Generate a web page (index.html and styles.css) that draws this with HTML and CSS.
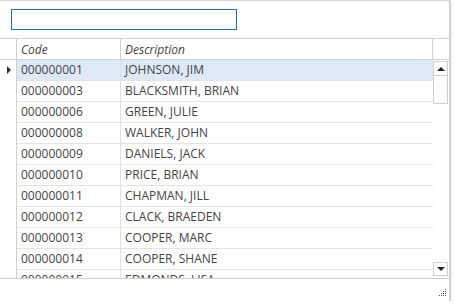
FILE: index.html
```html
<!DOCTYPE html>
<html lang="en">
<head>
  <meta charset="UTF-8">
  <title>Employee Lookup</title>
  <link rel="stylesheet" href="styles.css">
</head>
<body>
  <div class="window">
    <div class="search">
      <input type="text" class="search-box">
    </div>

    <div class="grid">
      <div class="grid-head">
        <div class="cell rowhead"></div>
        <div class="cell code head">Code</div>
        <div class="cell desc head">Description</div>
        <div class="cell corner"></div>
      </div>
      <div class="grid-body">
        <div class="rows">
          <div class="row selected">
            <div class="cell rowhead"><span class="marker"></span></div>
            <div class="cell code">000000001</div>
            <div class="cell desc">JOHNSON, JIM</div>
          </div>
          <div class="row">
            <div class="cell rowhead"></div>
            <div class="cell code">000000003</div>
            <div class="cell desc">BLACKSMITH, BRIAN</div>
          </div>
          <div class="row">
            <div class="cell rowhead"></div>
            <div class="cell code">000000006</div>
            <div class="cell desc">GREEN, JULIE</div>
          </div>
          <div class="row">
            <div class="cell rowhead"></div>
            <div class="cell code">000000008</div>
            <div class="cell desc">WALKER, JOHN</div>
          </div>
          <div class="row">
            <div class="cell rowhead"></div>
            <div class="cell code">000000009</div>
            <div class="cell desc">DANIELS, JACK</div>
          </div>
          <div class="row">
            <div class="cell rowhead"></div>
            <div class="cell code">000000010</div>
            <div class="cell desc">PRICE, BRIAN</div>
          </div>
          <div class="row">
            <div class="cell rowhead"></div>
            <div class="cell code">000000011</div>
            <div class="cell desc">CHAPMAN, JILL</div>
          </div>
          <div class="row">
            <div class="cell rowhead"></div>
            <div class="cell code">000000012</div>
            <div class="cell desc">CLACK, BRAEDEN</div>
          </div>
          <div class="row">
            <div class="cell rowhead"></div>
            <div class="cell code">000000013</div>
            <div class="cell desc">COOPER, MARC</div>
          </div>
          <div class="row">
            <div class="cell rowhead"></div>
            <div class="cell code">000000014</div>
            <div class="cell desc">COOPER, SHANE</div>
          </div>
          <div class="row">
            <div class="cell rowhead"></div>
            <div class="cell code">000000015</div>
            <div class="cell desc">EDMONDS, LISA</div>
          </div>
        </div>

        <div class="scrollbar">
          <div class="scroll-btn up"><span class="arrow-up"></span></div>
          <div class="thumb"></div>
          <div class="track"></div>
          <div class="scroll-btn down"><span class="arrow-down"></span></div>
        </div>
      </div>
    </div>

    <div class="status">
      <svg class="grip" width="8" height="8" viewBox="0 0 8 8">
        <rect x="6" y="0" width="1" height="1" fill="#555"/>
        <rect x="4" y="2" width="1" height="1" fill="#555"/>
        <rect x="6" y="2" width="1" height="1" fill="#555"/>
        <rect x="2" y="4" width="1" height="1" fill="#555"/>
        <rect x="4" y="4" width="1" height="1" fill="#555"/>
        <rect x="6" y="4" width="1" height="1" fill="#555"/>
        <rect x="0" y="6" width="1" height="1" fill="#555"/>
        <rect x="2" y="6" width="1" height="1" fill="#555"/>
        <rect x="4" y="6" width="1" height="1" fill="#555"/>
        <rect x="6" y="6" width="1" height="1" fill="#555"/>
      </svg>
    </div>
  </div>
</body>
</html>
```

FILE: styles.css
```css
/* Global styles */
body {
  margin: 0;
  background-color: #fff;
  font-family: 'Open Sans', 'Noto Sans', sans-serif;
  font-size: 12px;
  color: #444;
}

.window {
  width: 449px;
  height: 300px;
  background-color: #fff;
  border-top: 1px solid #d4d4d4;
  border-right: 2px solid #d2d2d2;
  box-shadow: 0 2px 2px rgba(0, 0, 0, 0.12);
  display: flex;
  flex-direction: column;
}

/* Search box */
.search {
  height: 37px;
  padding: 8px 0 0 11px;
  box-sizing: border-box;
}

.search-box {
  display: block;
  width: 226px;
  height: 21px;
  margin: 0;
  padding: 0;
  box-sizing: border-box;
  border: 1px solid #1c6fc3;
  outline: none;
}

/* Grid */
.grid {
  border-top: 1px solid #d0d0d0;
  border-bottom: 1px solid #d0d0d0;
  height: 241px;
  box-sizing: border-box;
  display: flex;
  flex-direction: column;
}

.grid-head {
  display: flex;
  height: 21px;
  border-bottom: 1px solid #d0d0d0;
  box-sizing: border-box;
}

.cell {
  box-sizing: border-box;
  padding-left: 4px;
  white-space: nowrap;
  overflow: hidden;
  line-height: 20px;
}

.rowhead {
  width: 17px;
  padding: 0;
  border-right: 1px solid #d0d0d0;
  position: relative;
}

.code {
  width: 104px;
  border-right: 1px solid #e0e0e0;
}

.desc {
  width: 312px;
}

.head {
  font-style: italic;
  color: #444;
  padding-top: 1px;
}

.grid-head .code,
.grid-head .desc {
  border-right: 1px solid #d0d0d0;
}

.corner {
  width: 16px;
}

.grid-body {
  flex: 1;
  display: flex;
  overflow: hidden;
}

.rows {
  width: 433px;
  overflow: hidden;
}

.row {
  display: flex;
  height: 21px;
}

.row .code,
.row .desc {
  border-bottom: 1px solid #e3e3e3;
  line-height: 20px;
}

.row.selected .code,
.row.selected .desc {
  background-color: #dde9f7;
}

.marker {
  position: absolute;
  left: 7px;
  top: 6px;
  width: 0;
  height: 0;
  border-top: 4px solid transparent;
  border-bottom: 4px solid transparent;
  border-left: 4px solid #333;
}

/* Scrollbar */
.scrollbar {
  width: 16px;
  display: flex;
  flex-direction: column;
  padding-top: 1px;
  box-sizing: border-box;
}

.scroll-btn {
  width: 15px;
  height: 15px;
  border: 1px solid #cfcfcf;
  box-sizing: border-box;
  display: flex;
  align-items: center;
  justify-content: center;
}

.thumb {
  width: 15px;
  height: 28px;
  border: 1px solid #cfcfcf;
  border-top: none;
  box-sizing: border-box;
}

.track {
  flex: 1;
}

.scroll-btn.down {
  height: 14px;
  margin-bottom: 2px;
}

.arrow-up {
  width: 0;
  height: 0;
  border-left: 4px solid transparent;
  border-right: 4px solid transparent;
  border-bottom: 4px solid #222;
}

.arrow-down {
  width: 0;
  height: 0;
  border-left: 4px solid transparent;
  border-right: 4px solid transparent;
  border-top: 4px solid #222;
}

/* Status strip */
.status {
  flex: 1;
  display: flex;
  justify-content: flex-end;
  align-items: flex-end;
  padding: 0 2px 4px 0;
}

.grip {
  display: block;
}
```
